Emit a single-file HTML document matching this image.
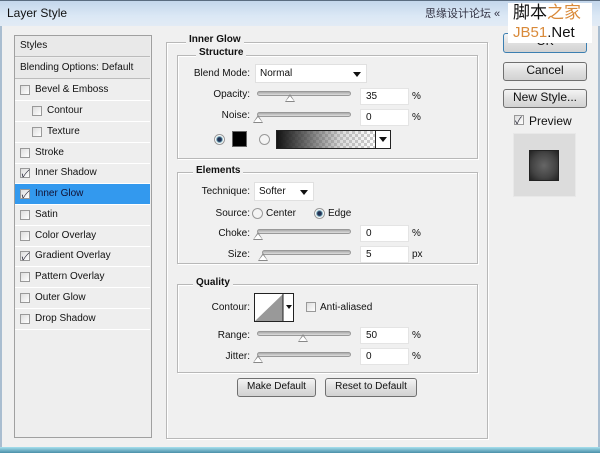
<!DOCTYPE html>
<html><head><meta charset="utf-8"><style>
*{margin:0;padding:0;box-sizing:border-box}
body{width:600px;height:453px;background:#f0f0f0;font-family:"Liberation Sans","Noto Sans CJK SC",sans-serif;font-size:10px;color:#111;position:relative;overflow:hidden}
.a{position:absolute}
.t{position:absolute;white-space:nowrap;line-height:12px}
.r{text-align:right}
.grp{position:absolute;border:1px solid #b8b8b8;box-shadow:inset 1px 1px 0 #fff,1px 1px 0 #fff}
.lbl{position:absolute;background:#f0f0f0;padding:0 3px;font-weight:bold;font-size:10px;line-height:12px}
.inp{position:absolute;background:#fff;border:1px solid #e4e4e4;height:17px;padding:2px 5px;line-height:12px}
.sl{position:absolute;height:5px;border:1px solid #999;border-radius:3px;background:linear-gradient(#aaa,#ddd)}
.th{position:absolute;width:0;height:0;border-left:5px solid transparent;border-right:5px solid transparent;border-bottom:8px solid #888}
.th:after{content:"";position:absolute;left:-4px;top:2px;border-left:4px solid transparent;border-right:4px solid transparent;border-bottom:5px solid #fff}
.dd{position:absolute;background:#fff;border:1px solid #e0e0e0;height:19px;padding:3px 4px;line-height:12px}
.dd:after{content:"";position:absolute;right:5px;top:7px;border-left:4px solid transparent;border-right:4px solid transparent;border-top:5px solid #111}
.btn{position:absolute;border:1px solid #707070;border-radius:3px;background:linear-gradient(#f4f4f4,#e0e0e0 50%,#d2d2d2);text-align:center;font-size:12px;line-height:15px}
.row{position:absolute;left:15px;width:135px;height:21px;border-bottom:1px solid #fff;line-height:20px;font-size:10px}
.cb{position:absolute;width:10px;height:10px;border:1px solid #999;background:linear-gradient(135deg,#ddd,#fff);top:5px}
.ck:after{content:"✓";position:absolute;left:0px;top:-4px;font-size:10px;color:#223}
.rad{position:absolute;width:11px;height:11px;border-radius:50%;border:1px solid #999;background:#f4f4f4}
</style></head><body>
<div class="a" style="left:0;top:0;width:600px;height:26px;background:linear-gradient(#c3d6eb,#dbe8f5 60%,#e2ebf5);border-top:1px solid #5a6c80"></div>
<div class="t" style="left:7px;top:7px;font-size:12px;color:#111">Layer Style</div>
<div class="t" style="left:425px;top:8px;font-size:11px;color:#334">思缘设计论坛 «</div>
<div class="a" style="left:0;top:26px;width:2px;height:427px;background:#a9bdd0"></div>
<div class="a" style="left:598px;top:26px;width:2px;height:427px;background:#a9bdd0"></div>
<div class="a" style="left:0;top:447px;width:600px;height:6px;background:linear-gradient(#a7e0ee,#4a8fa8)"></div>

<div class="a" style="left:14px;top:35px;width:138px;height:403px;border:1px solid #a0a0a0;background:#eeeeee"></div>
<div class="row" style="top:36px;background:#e9e9e9;border-bottom:1px solid #bbb;padding-left:5px">Styles</div>
<div class="row" style="top:58px;background:#e9e9e9;border-bottom:1px solid #bbb;padding-left:5px">Blending Options: Default</div>
<div class="row" style="top:80px"><i class="cb" style="left:5px"></i><span class="a" style="left:20px">Bevel &amp; Emboss</span></div>
<div class="row" style="top:101px"><i class="cb" style="left:17px"></i><span class="a" style="left:32px">Contour</span></div>
<div class="row" style="top:122px"><i class="cb" style="left:17px"></i><span class="a" style="left:32px">Texture</span></div>
<div class="row" style="top:143px"><i class="cb" style="left:5px"></i><span class="a" style="left:20px">Stroke</span></div>
<div class="row" style="top:163px"><i class="cb ck" style="left:5px"></i><span class="a" style="left:20px">Inner Shadow</span></div>
<div class="row" style="top:184px;background:#3399ee;color:#113"><i class="cb ck" style="left:5px"></i><span class="a" style="left:20px">Inner Glow</span></div>
<div class="row" style="top:205px"><i class="cb" style="left:5px"></i><span class="a" style="left:20px">Satin</span></div>
<div class="row" style="top:226px"><i class="cb" style="left:5px"></i><span class="a" style="left:20px">Color Overlay</span></div>
<div class="row" style="top:246px"><i class="cb ck" style="left:5px"></i><span class="a" style="left:20px">Gradient Overlay</span></div>
<div class="row" style="top:267px"><i class="cb" style="left:5px"></i><span class="a" style="left:20px">Pattern Overlay</span></div>
<div class="row" style="top:288px"><i class="cb" style="left:5px"></i><span class="a" style="left:20px">Outer Glow</span></div>
<div class="row" style="top:309px"><i class="cb" style="left:5px"></i><span class="a" style="left:20px">Drop Shadow</span></div>

<div class="grp" style="left:166px;top:42px;width:322px;height:397px"></div>
<div class="lbl" style="left:186px;top:34px">Inner Glow</div>

<div class="grp" style="left:177px;top:55px;width:301px;height:104px"></div>
<div class="lbl" style="left:196px;top:47px">Structure</div>
<div class="t r" style="left:180px;width:70px;top:68px">Blend Mode:</div>
<div class="dd" style="left:255px;top:64px;width:112px">Normal</div>
<div class="t r" style="left:180px;width:70px;top:89px">Opacity:</div>
<div class="sl" style="left:257px;top:91px;width:94px"></div><div class="th" style="left:285px;top:94px"></div>
<div class="inp" style="left:360px;top:88px;width:49px">35</div><div class="t" style="left:412px;top:91px">%</div>
<div class="t r" style="left:180px;width:70px;top:110px">Noise:</div>
<div class="sl" style="left:257px;top:112px;width:94px"></div><div class="th" style="left:253px;top:115px"></div>
<div class="inp" style="left:360px;top:109px;width:49px">0</div><div class="t" style="left:412px;top:112px">%</div>
<div class="rad" style="left:214px;top:134px;background:radial-gradient(#235 30%,#7ab 45%,#fff 60%)"></div>
<div class="a" style="left:232px;top:131px;width:15px;height:16px;background:#000;border:1px solid #666"></div>
<div class="rad" style="left:259px;top:134px"></div>
<div class="a" style="left:276px;top:130px;width:100px;height:19px;border:1px solid #222;background:linear-gradient(90deg,rgba(20,20,20,1),rgba(90,90,90,.8) 35%,rgba(160,160,160,.4) 65%,rgba(255,255,255,0)),repeating-conic-gradient(#ccc 0 25%,#fff 0 50%) 0 0/6px 6px"></div>
<div class="a" style="left:375px;top:130px;width:16px;height:19px;border:1px solid #222;background:#fff"></div>
<div class="a" style="left:379px;top:137px;border-left:4px solid transparent;border-right:4px solid transparent;border-top:5px solid #111"></div>

<div class="grp" style="left:177px;top:172px;width:301px;height:92px"></div>
<div class="lbl" style="left:193px;top:165px">Elements</div>
<div class="t r" style="left:180px;width:70px;top:186px">Technique:</div>
<div class="dd" style="left:254px;top:182px;width:60px">Softer</div>
<div class="t r" style="left:180px;width:70px;top:208px">Source:</div>
<div class="rad" style="left:252px;top:208px"></div><div class="t" style="left:266px;top:208px">Center</div>
<div class="rad" style="left:314px;top:208px;background:radial-gradient(#235 30%,#7ab 45%,#fff 60%)"></div><div class="t" style="left:328px;top:208px">Edge</div>
<div class="t r" style="left:180px;width:70px;top:228px">Choke:</div>
<div class="sl" style="left:257px;top:229px;width:94px"></div><div class="th" style="left:253px;top:232px"></div>
<div class="inp" style="left:360px;top:225px;width:49px">0</div><div class="t" style="left:412px;top:228px">%</div>
<div class="t r" style="left:180px;width:70px;top:249px">Size:</div>
<div class="sl" style="left:262px;top:250px;width:89px"></div><div class="th" style="left:258px;top:253px"></div>
<div class="inp" style="left:360px;top:246px;width:49px">5</div><div class="t" style="left:412px;top:249px">px</div>

<div class="grp" style="left:177px;top:284px;width:301px;height:89px"></div>
<div class="lbl" style="left:193px;top:277px">Quality</div>
<div class="t r" style="left:180px;width:70px;top:302px">Contour:</div>
<div class="a" style="left:254px;top:293px;width:40px;height:29px;border:1px solid #222;background:#fff;overflow:hidden">
<svg width="38" height="27" style="position:absolute;left:0;top:0"><polygon points="0,27 28,0 28,27" fill="#999"/><line x1="28" y1="0" x2="28" y2="27" stroke="#222"/><polygon points="31,11 37,11 34,15" fill="#111"/></svg></div>
<div class="cb" style="left:306px;top:302px"></div><div class="t" style="left:320px;top:302px">Anti-aliased</div>
<div class="t r" style="left:180px;width:70px;top:330px">Range:</div>
<div class="sl" style="left:257px;top:331px;width:94px"></div><div class="th" style="left:298px;top:334px"></div>
<div class="inp" style="left:360px;top:327px;width:49px">50</div><div class="t" style="left:412px;top:330px">%</div>
<div class="t r" style="left:180px;width:70px;top:351px">Jitter:</div>
<div class="sl" style="left:257px;top:352px;width:94px"></div><div class="th" style="left:253px;top:355px"></div>
<div class="inp" style="left:360px;top:348px;width:49px">0</div><div class="t" style="left:412px;top:351px">%</div>
<div class="btn" style="left:237px;top:378px;width:79px;height:19px;font-size:10px;line-height:16px">Make Default</div>
<div class="btn" style="left:325px;top:378px;width:92px;height:19px;font-size:10px;line-height:16px">Reset to Default</div>

<div class="btn" style="left:503px;top:33px;width:84px;height:20px;border-color:#3c7fb1">OK</div>
<div class="a" style="left:508px;top:3px;width:84px;height:40px;background:#fff"></div>
<div class="t" style="left:513px;top:3px;font-size:17px;line-height:20px;color:#111">脚本<span style="color:#d98a3a">之家</span></div>
<div class="t" style="left:513px;top:24px;font-size:15px;line-height:18px;color:#d98a3a">JB51<span style="color:#111">.Net</span></div>
<div class="btn" style="left:503px;top:62px;width:84px;height:19px">Cancel</div>
<div class="btn" style="left:503px;top:89px;width:84px;height:19px">New Style...</div>
<div class="cb ck" style="left:514px;top:115px"></div><div class="t" style="left:529px;top:114px;font-size:12px;line-height:14px">Preview</div>
<div class="a" style="left:513px;top:133px;width:63px;height:64px;background:#dcdcdc;border:1px solid #e8e8e8"></div>
<div class="a" style="left:529px;top:150px;width:30px;height:31px;background:radial-gradient(#666,#444 60%,#222);border:1px solid #222"></div>
</body></html>
